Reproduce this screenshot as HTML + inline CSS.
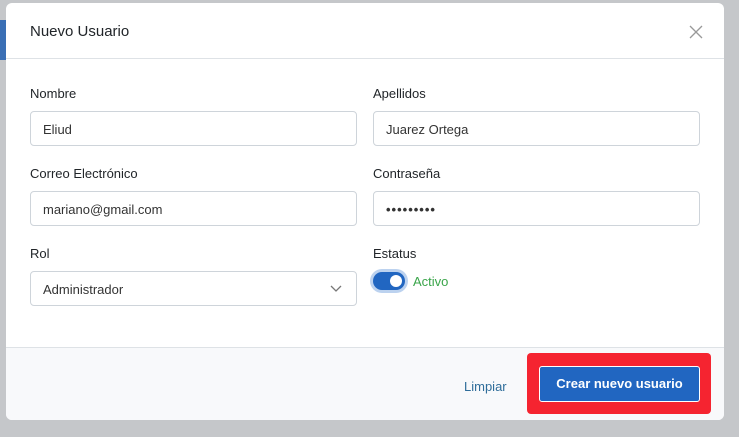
<!DOCTYPE html>
<html><head><style>
body{margin:0;width:739px;height:437px;background:#c5c7ca;font-family:"Liberation Sans",sans-serif;position:relative;overflow:hidden;color:#212529}
.modal{position:absolute;left:6px;top:3px;width:718px;height:417px;background:#fff;border-radius:6px;overflow:hidden}
.hdr{height:55px;border-bottom:1px solid #dee2e6;position:relative}
.title{position:absolute;left:24px;top:20px;font-size:15px}
.x{position:absolute;left:683px;top:22px;width:14px;height:14px}
.lbl{position:absolute;font-size:13px}
.inp{position:absolute;width:327px;height:35px;border:1px solid #ced4da;border-radius:4px;box-sizing:border-box;font-size:13px;padding:10px 12px;color:#333}
.ftr{position:absolute;left:0;top:344px;width:718px;height:73px;background:#f8f9fb;border-top:1px solid #dee2e6}
</style></head><body>
<div style="position:absolute;left:0;top:20px;width:6px;height:40px;background:#3a6fb5"></div>
<div class="modal">
<div class="hdr"><div class="title">Nuevo Usuario</div>
<svg class="x" viewBox="0 0 14 14"><path d="M1 1L13 13M13 1L1 13" stroke="#999" stroke-width="1.3"/></svg></div>
<div class="lbl" style="left:24px;top:83px">Nombre</div>
<div class="lbl" style="left:367px;top:83px">Apellidos</div>
<div class="inp" style="left:24px;top:108px">Eliud</div>
<div class="inp" style="left:367px;top:108px">Juarez Ortega</div>
<div class="lbl" style="left:24px;top:163px">Correo Electrónico</div>
<div class="lbl" style="left:367px;top:163px">Contraseña</div>
<div class="inp" style="left:24px;top:188px">mariano@gmail.com</div>
<div class="inp" style="left:367px;top:188px;letter-spacing:1px;font-weight:bold">•••••••••</div>
<div class="lbl" style="left:24px;top:243px">Rol</div>
<div class="lbl" style="left:367px;top:243px">Estatus</div>
<div class="inp" style="left:24px;top:268px">Administrador
<svg style="position:absolute;right:14px;top:13px" width="12" height="8" viewBox="0 0 12 8"><path d="M1 1L6 6L11 1" stroke="#777" fill="none" stroke-width="1.3"/></svg></div>
<div style="position:absolute;left:364px;top:266px;width:38px;height:24px;border-radius:12px;background:#bcd2ef"></div>
<div style="position:absolute;left:367px;top:269px;width:32px;height:18px;border-radius:9px;background:#2166c1"></div>
<div style="position:absolute;left:384px;top:272px;width:12px;height:12px;border-radius:6px;background:#fff"></div>
<div style="position:absolute;left:407px;top:271px;font-size:13px;color:#3aa54a">Activo</div>
<div class="ftr">
<div style="position:absolute;left:458px;top:31px;font-size:13px;color:#2f6d9a">Limpiar</div>
<div style="position:absolute;left:521px;top:5px;width:184px;height:61px;background:#f52430;border-radius:4px"></div>
<div style="position:absolute;left:533px;top:18px;width:161px;height:36px;background:#2166c1;border:1px solid #fff;box-sizing:border-box;border-radius:3px;color:#fff;font-size:13px;font-weight:bold;text-align:center;line-height:34px">Crear nuevo usuario</div>
</div>
</div>
</body></html>
